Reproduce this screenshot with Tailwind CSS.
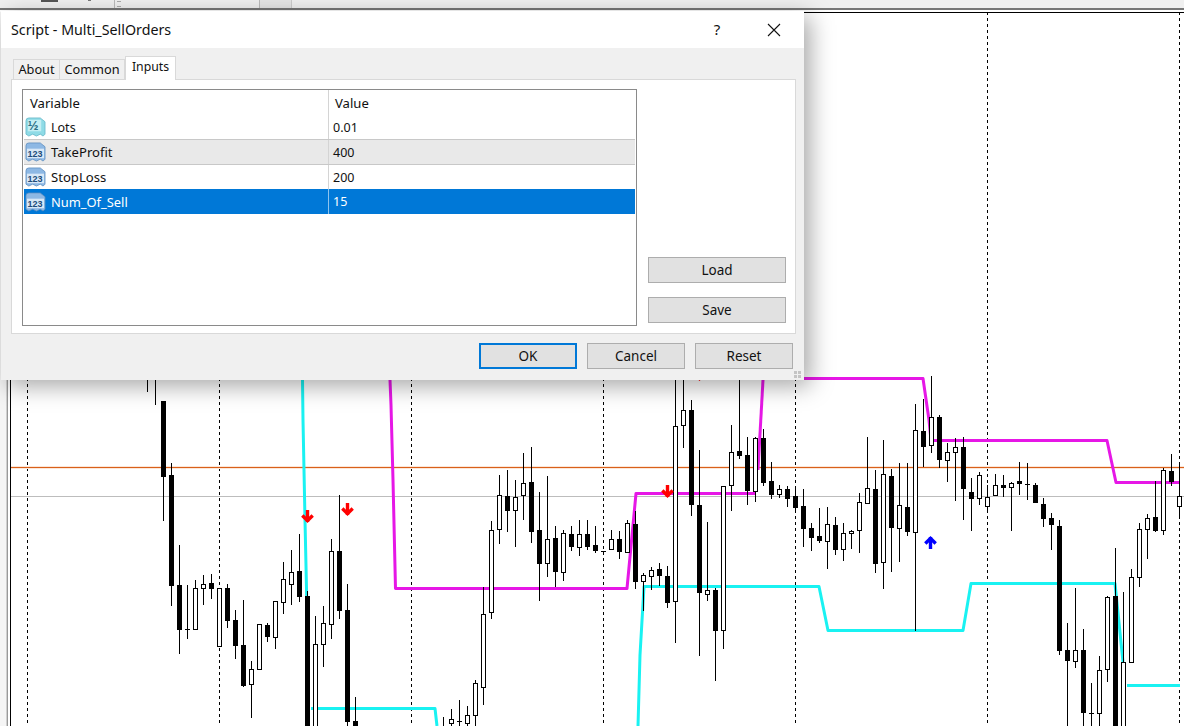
<!DOCTYPE html>
<html lang="en">
<head>
  <meta charset="UTF-8">
  <title>Script - Multi_SellOrders</title>
  <script src="https://cdn.jsdelivr.net/npm/@tailwindcss/browser@4"></script>
</head>
<body class="relative w-[1184px] h-[726px] overflow-hidden bg-white font-['Noto_Sans',sans-serif] text-[#111]">

  <!-- toolbar strip above the chart -->
  <div class="flex h-[10px] bg-[#f0f0f0] border-b-2 border-[#777]">
    <div class="w-[115px] flex items-start gap-[30px] pl-[41px] border-r border-[#bbb]">
      <div class="w-[17px] h-[2px] bg-[#555]"></div>
      <div class="w-[3px] h-[1px] bg-[#777]"></div>
    </div>
    <div class="w-[145px] border-r border-[#bbb] pl-[2px] pt-[1px]">
      <div class="w-[4px] h-[6px] border-y border-[#aaa]"></div>
    </div>
    <div class="w-[32px] bg-[#e6e6e6] border-r border-[#ccc]"></div>
  </div>

  <!-- chart canvas -->
  <svg id="chart" class="absolute left-0 top-0" width="1184" height="726" viewBox="0 0 1184 726" shape-rendering="crispEdges"></svg>

  <!-- dialog -->
  <div class="absolute left-[1px] top-[11px] w-[803px] h-[369px] flex flex-col bg-[#f0f0f0] shadow-[6px_6px_22px_rgba(0,0,0,0.35)]">
    <div class="h-[37px] shrink-0 bg-white flex items-center pl-[10px] text-[14.25px]">
      <span class="flex-1">Script - Multi_SellOrders</span>
      <span class="w-[46px] mr-[11px] text-center text-[15px]">?</span>
      <span class="w-[46px] mr-[7px] flex justify-center">
        <svg width="14" height="14" viewBox="0 0 14 14" fill="none" stroke="#111" stroke-width="1.1"><path d="M1 1L13 13M13 1L1 13"/></svg>
      </span>
    </div>

    <div class="flex items-end h-[31px] shrink-0 pl-[12px] text-[12.75px]">
      <div class="w-[47px] h-[20px] bg-[#f0f0f0] border border-b-0 border-[#d9d9d9] flex items-center justify-center">About</div>
      <div class="w-[65px] h-[20px] bg-[#f0f0f0] border border-l-0 border-b-0 border-[#d9d9d9] flex items-center justify-center">Common</div>
      <div class="relative -mb-px w-[51px] h-[24px] bg-white border border-b-0 border-[#d9d9d9] flex items-center justify-center pb-[2px] text-[12.25px]">Inputs</div>
    </div>

    <div class="ml-[10px] mr-[8px] h-[255px] shrink-0 bg-white border border-[#d9d9d9] pl-[10px] pt-[9px] flex">
      <div class="w-[615px] h-[237px] shrink-0 border border-[#8a8a8a] px-px text-[13.1px]">
        <div class="flex h-[25px] items-center">
          <div class="w-[305px] pl-[6px] pt-[2px] h-full flex items-center border-r border-[#d4d4d4]">Variable</div>
          <div class="pl-[6px] pt-[2px]">Value</div>
        </div>
        <div class="flex h-[25px] items-center border-b border-[#c8c8c8]">
          <div class="w-[305px] h-full flex items-center gap-[5px] pl-[1px] border-r border-[#d4d4d4] text-[12.5px]">
            <svg width="21" height="20" viewBox="0 0 22 21"><path d="M1 4Q1 1 4 1H16L21 5V18L19 20L16 18L12 20L8 18L4 20L1 18Z" fill="#8fdbe6" stroke="#62b5c6" stroke-width=".8"/><rect x="3" y="3" width="14" height="12" fill="#c4eef3"/><text x="3" y="14" font-size="13.5" font-weight="700" fill="#2c6f86" font-family="Liberation Sans">½</text></svg>
            <span class="pt-[2px]">Lots</span>
          </div>
          <div class="pl-[4px] pt-[2px] text-[12.5px]">0.01</div>
        </div>
        <div class="flex h-[25px] items-center bg-[#e9e9e9] border-b border-[#c8c8c8]">
          <div class="w-[305px] h-full flex items-center gap-[5px] pl-[1px] border-r border-[#d4d4d4]">
            <svg width="21" height="20" viewBox="0 0 22 21"><path d="M1 4Q1 1 4 1H16L21 5V18L19 20L16 18L12 20L8 18L4 20L1 18Z" fill="#8db8e4" stroke="#5d8cbd" stroke-width=".8"/><rect x="2" y="7" width="18" height="10" fill="#d8e8f7"/><text x="2.5" y="16" font-size="9.5" font-weight="700" fill="#214c7a" font-family="Liberation Sans">123</text></svg>
            <span class="pt-[2px]">TakeProfit</span>
          </div>
          <div class="pl-[4px] pt-[2px] text-[12.5px]">400</div>
        </div>
        <div class="flex h-[24px] items-center">
          <div class="w-[305px] h-full flex items-center gap-[5px] pl-[1px] border-r border-[#d4d4d4]">
            <svg width="21" height="20" viewBox="0 0 22 21"><path d="M1 4Q1 1 4 1H16L21 5V18L19 20L16 18L12 20L8 18L4 20L1 18Z" fill="#8db8e4" stroke="#5d8cbd" stroke-width=".8"/><rect x="2" y="7" width="18" height="10" fill="#d8e8f7"/><text x="2.5" y="16" font-size="9.5" font-weight="700" fill="#214c7a" font-family="Liberation Sans">123</text></svg>
            <span class="pt-[2px]">StopLoss</span>
          </div>
          <div class="pl-[4px] pt-[2px] text-[12.5px]">200</div>
        </div>
        <div class="flex h-[25px] items-center bg-[#0078d7] text-white">
          <div class="w-[305px] h-full flex items-center gap-[5px] pl-[1px] border-r border-[#8fc4ee]">
            <svg width="21" height="20" viewBox="0 0 22 21"><path d="M1 4Q1 1 4 1H16L21 5V18L19 20L16 18L12 20L8 18L4 20L1 18Z" fill="#8db8e4" stroke="#5d8cbd" stroke-width=".8"/><rect x="2" y="7" width="18" height="10" fill="#d8e8f7"/><text x="2.5" y="16" font-size="9.5" font-weight="700" fill="#214c7a" font-family="Liberation Sans">123</text></svg>
            <span class="pt-[2px] text-[12.9px]">Num_Of_Sell</span>
          </div>
          <div class="pl-[4px] pt-[2px] text-[12.5px]">15</div>
        </div>
      </div>
      <div class="flex flex-col gap-[14px] ml-[11px] mt-[168px] text-[13.5px]">
        <button class="w-[138px] h-[26px] bg-[#e1e1e1] border border-[#adadad]">Load</button>
        <button class="w-[138px] h-[26px] bg-[#e1e1e1] border border-[#adadad]">Save</button>
      </div>
    </div>

    <div class="flex justify-end gap-[10px] pr-[11px] pt-[9px] text-[13.5px]">
      <button class="w-[98px] h-[26px] bg-[#e1e1e1] border-2 border-[#0078d7]">OK</button>
      <button class="w-[98px] h-[26px] bg-[#e1e1e1] border border-[#adadad]">Cancel</button>
      <button class="w-[98px] h-[26px] bg-[#e1e1e1] border border-[#adadad]">Reset</button>
    </div>

    <!-- size grip -->
    <svg class="absolute right-[2px] bottom-[1px]" width="8" height="8" fill="#c4c4c4"><rect width="3" height="3"/><rect x="4" width="3" height="3"/><rect y="4" width="3" height="3"/><rect x="4" y="4" width="3" height="3"/></svg>
  </div>

  <script>
    // x, wick top, wick bottom, body top, body bottom, filled (0 hollow, 1 black)
    const candles = [
      [147,370,392],[155,370,405],
      [163,401,521,401,477,1],[171,463,606,475,586,1],[179,545,654,585,630,1],[187,585,639,629,629,0],[195,580,629,588,629,0],
      [203,575,605,584,588,0],[211,574,599,583,589,1],[219,588,646,588,646,0],[227,584,628,588,621,1],[235,610,659,620,646,1],
      [243,600,687,645,686,1],[251,661,718,669,684,0],[259,624,669,624,669,0],[267,623,642,625,637,1],[275,601,649,601,637,0],
      [283,562,614,579,602,0],[291,550,605,572,584,0],[299,534,602,571,597,1],[307,591,726,596,726,1],[315,616,726,644,726,0],
      [323,606,667,623,644,0],[331,539,639,551,624,0],[339,495,619,551,611,1],[347,584,726,610,722,1],[355,697,726,721,726,1],
      [443,717,726],[451,709,726,719,723,0],[459,700,726,721,721,0],[467,706,726,715,723,0],[475,680,726,683,715,0],
      [483,587,705,614,687,0],[491,521,619,530,612,0],[499,475,544,495,529,0],[507,470,532,496,511,1],[515,480,547,497,510,0],
      [523,453,520,483,495,0],[531,447,543,482,532,1],[539,492,601,530,564,1],[547,476,577,539,563,0],[555,526,587,538,572,1],
      [563,530,581,533,572,0],[571,526,551,534,547,1],[579,520,556,534,547,0],[587,520,550,534,547,1],[595,526,553,545,551,1],
      [603,551,553,551,552,1],[611,530,549,539,549,0],[619,531,559,539,552,1],[627,520,552,523,552,0],[635,511,589,524,582,1],
      [643,573,611,575,581,0],[651,567,590,570,576,0],[659,563,586,569,576,1],[667,566,608,576,603,1],[675,380,643,426,601,0],
      [683,380,448,410,425,0],[691,400,516,410,505,1],[699,450,656,505,593,1],[707,522,601,590,594,0],[715,588,681,590,631,1],
      [723,486,649,486,630,0],[731,425,511,452,485,0],[739,380,459,451,456,1],[747,437,505,455,491,1],[755,437,502,438,491,0],
      [763,429,486,438,483,1],[771,462,499,481,495,1],[779,485,498,489,494,0],[787,486,507,489,499,1],[795,486,512,496,508,1],
      [803,489,547,506,529,1],[811,523,551,528,538,1],[819,508,543,536,541,1],[827,507,569,524,541,0],[835,517,555,525,550,1],
      [843,523,561,533,549,0],[851,530,549,531,533,0],[859,493,553,502,530,0],[867,437,503,488,503,0],[875,470,573,489,564,1],
      [883,440,589,474,562,0],[891,469,572,476,528,1],[899,463,562,505,528,0],[907,463,536,507,532,1],[915,404,631,430,532,0],
      [923,399,467,431,447,1],[931,376,453,417,445,0],[939,415,468,417,460,1],[947,443,482,452,460,0],[955,438,501,447,452,0],
      [963,437,520,447,489,1],[971,478,531,492,499,1],[979,472,505,475,498,0],[987,485,513,497,506,0],[995,474,495,485,495,0],
      [1003,475,497,485,488,1],[1011,482,531,483,487,0],[1019,462,495,481,484,1],[1027,463,500,484,484,0],[1035,483,503,485,503,1],
      [1043,498,527,504,519,1],[1051,513,550,518,525,1],[1059,520,655,526,651,1],[1067,623,726,650,661,1],[1075,588,668,650,661,0],
      [1083,629,726,650,713,1],[1091,683,726,713,713,0],[1099,656,726,670,713,0],[1107,596,682,597,669,0],[1115,548,726,596,726,1],
      [1123,592,726,662,726,0],[1131,569,663,577,662,0],[1139,523,587,529,577,0],[1147,514,559,518,529,0],[1155,481,532,517,531,1],
      [1163,468,535,470,530,0],[1171,454,486,471,482,1],[1179,463,518,496,506,0]
    ];
    const cyan = [
      "302.5,380 303,420 305,520 307,612",
      "311,708.5 435,708.5 437,726",
      "638,726 640,655 644,586.5 819,586.5 828,630.5 963,630.5 971,583.5 1115,583.5 1123,662",
      "1127,685.5 1180,685.5"
    ];
    const magenta = [
      "390,380 391,405 393,480 395.5,588.5 627,588.5 636,493.5 756,493.5",
      "758,470 763,380",
      "804,378.5 923,378.5 929,420 931,440",
      "934,440.5 1107,440.5 1116,482.5 1180,482.5"
    ];

    let out = '<rect x="0" y="12" width="6" height="714" fill="#f5f5f5"/><rect x="6" y="12" width="1" height="714" fill="#cfcfcf"/><rect x="7" y="12" width="1" height="714" fill="#9a9a9a"/>';
    out += '<path d="M11 12.5H1184M10.5 12V726" stroke="#000" fill="none"/>';
    for (let x = 27; x < 1184; x += 192) {
      out += `<line x1="${x}.5" y1="12" x2="${x}.5" y2="726" stroke="#000" stroke-dasharray="3 3"/>`;
    }
    // ask line has a faint tint either side, as in the screenshot
    out += '<rect x="11" y="466" width="1173" height="3" fill="#fbe6d8"/>';
    out += '<line x1="11" y1="467.5" x2="1184" y2="467.5" stroke="#d9601a"/>';
    out += '<line x1="11" y1="496.5" x2="1184" y2="496.5" stroke="#bdbdbd"/>';
    const poly = (pts, color) => `<polyline points="${pts}" fill="none" stroke="${color}" stroke-width="3" stroke-linejoin="round" shape-rendering="auto"/>`;
    cyan.forEach(p => out += poly(p, "#19f2f2"));
    magenta.forEach(p => out += poly(p, "#e617e6"));
    for (const [x, top, bottom, bodyTop, bodyBottom, filled] of candles) {
      out += `<line x1="${x}.5" y1="${top}" x2="${x}.5" y2="${bottom}" stroke="#000"/>`;
      if (bodyTop === undefined) continue;
      if (bodyBottom - bodyTop < 1) {
        out += `<line x1="${x - 2}" y1="${bodyTop}.5" x2="${x + 3}" y2="${bodyTop}.5" stroke="#000"/>`;
      } else if (filled) {
        out += `<rect x="${x - 2}" y="${bodyTop}" width="5" height="${bodyBottom - bodyTop}" fill="#000"/>`;
      } else {
        out += `<rect x="${x - 1.5}" y="${bodyTop + .5}" width="4" height="${bodyBottom - bodyTop}" fill="#fff" stroke="#000"/>`;
      }
    }
    // signal arrows: thick shaft with a chevron head
    const arrow = (x, y, up, color) => `<g transform="translate(${x}.5 ${y}) scale(1 ${up ? -1 : 1})" fill="none" stroke="${color}" shape-rendering="auto"><path d="M0 -7V5" stroke-width="3.4"/><path d="M-5.2 -1.4L0 3.6L5.2 -1.4" stroke-width="3.4"/></g>`;
    out += arrow(307, 517, false, "#f00") + arrow(347, 510, false, "#f00") + arrow(667, 492, false, "#f00") + arrow(699, 375, false, "#f00") + arrow(930, 542, true, "#00f");
    document.getElementById("chart").innerHTML = out;
  </script>
</body>
</html>
